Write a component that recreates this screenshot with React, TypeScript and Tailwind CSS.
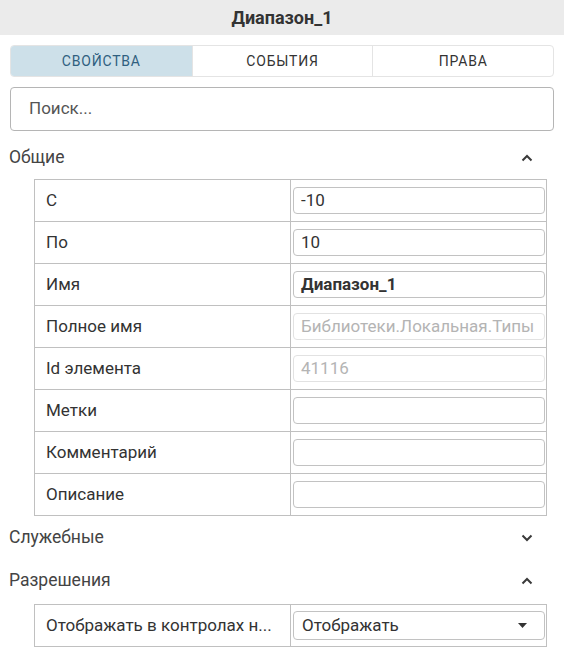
import React from "react";

type Row = {
  label: string;
  value: string;
  bold?: boolean;
  disabled?: boolean;
};

const general: Row[] = [
  { label: "С", value: "-10" },
  { label: "По", value: "10" },
  { label: "Имя", value: "Диапазон_1", bold: true },
  { label: "Полное имя", value: "Библиотеки.Локальная.Типы", disabled: true },
  { label: "Id элемента", value: "41116", disabled: true },
  { label: "Метки", value: "" },
  { label: "Комментарий", value: "" },
  { label: "Описание", value: "" },
];

function Chevron({ up }: { up: boolean }) {
  return (
    <svg width="12" height="8" viewBox="0 0 12 8" className="text-[#3a3a3a]">
      <path
        d={up ? "M1.5 6.5 L6 2 L10.5 6.5" : "M1.5 1.5 L6 6 L10.5 1.5"}
        fill="none"
        stroke="currentColor"
        strokeWidth="2"
      />
    </svg>
  );
}

function SectionHeader({ title, open }: { title: string; open: boolean }) {
  return (
    <div className="flex h-[43px] items-center justify-between pl-[9px] pr-[31px]">
      <span className="text-[17.5px] text-[#444]">{title}</span>
      <Chevron up={open} />
    </div>
  );
}

function Field({ row }: { row: Row }) {
  const base =
    "flex h-[27px] w-full items-center overflow-hidden whitespace-nowrap rounded-[4px] border px-[7px] text-[17px]";
  if (row.disabled) {
    return (
      <div className={`${base} border-[#e2e2e2] text-[#b4b4b4]`}>{row.value}</div>
    );
  }
  return (
    <div
      className={`${base} border-[#c2c2c2] text-[#333] ${
        row.bold ? "font-bold" : ""
      }`}
    >
      {row.value}
    </div>
  );
}

export default function App() {
  return (
    <div className="w-[564px] h-[652px] overflow-hidden bg-white font-['Roboto',sans-serif] text-[#333]">
      {/* title bar */}
      <div className="flex h-[35px] items-center justify-center bg-[#ebebeb]">
        <span className="text-[18px] font-bold text-[#333]">Диапазон_1</span>
      </div>

      <div className="px-[10px] pt-[10px]">
        {/* tabs */}
        <div className="grid h-[32px] grid-cols-3 overflow-hidden rounded-[4px] border border-[#e4e4e4] text-[14px] font-normal tracking-[0.8px]">
          <div className="flex items-center justify-center bg-[#cde0e9] text-[#2f5f80]">
            СВОЙСТВА
          </div>
          <div className="flex items-center justify-center border-l border-[#e4e4e4] text-[#333]">
            СОБЫТИЯ
          </div>
          <div className="flex items-center justify-center border-l border-[#e4e4e4] text-[#333]">
            ПРАВА
          </div>
        </div>

        {/* search */}
        <div className="mt-[10px] flex h-[44px] items-center rounded-[4px] border border-[#b5b5b5] px-[18px] text-[17px] text-[#555]">
          Поиск...
        </div>
      </div>

      <div className="mt-[5px]">
        <SectionHeader title="Общие" open />
        <div className="ml-[34px] mr-[17px] border border-[#c0c0c0]">
          {general.map((row, i) => (
            <div
              key={row.label}
              className={`flex ${i > 0 ? "h-[42px] border-t border-[#c0c0c0]" : "h-[41px]"}`}
            >
              <div className="flex w-[256px] shrink-0 items-center border-r border-[#c0c0c0] pl-[11px] text-[17px] text-[#333]">
                {row.label}
              </div>
              <div className="flex min-w-0 flex-1 items-center pl-[2px] pr-[1px]">
                <Field row={row} />
              </div>
            </div>
          ))}
        </div>

        <SectionHeader title="Служебные" open={false} />
        <SectionHeader title="Разрешения" open />

        <div className="ml-[34px] mr-[17px] mt-[2px] border border-[#c0c0c0]">
          <div className="flex h-[41px]">
            <div className="flex w-[256px] shrink-0 items-center overflow-hidden whitespace-nowrap border-r border-[#c0c0c0] pl-[11px] text-[17px] text-[#333]">
              Отображать в контролах н...
            </div>
            <div className="flex min-w-0 flex-1 items-center pl-[2px] pr-[1px]">
              <div className="flex h-[29px] w-full items-center justify-between rounded-[4px] border border-[#c2c2c2] pl-[8px] pr-[17px] text-[17px] text-[#333]">
                <span>Отображать</span>
                <svg width="9" height="5" viewBox="0 0 9 5">
                  <path d="M0 0 H9 L4.5 5 Z" fill="#333" />
                </svg>
              </div>
            </div>
          </div>
        </div>
      </div>
    </div>
  );
}
